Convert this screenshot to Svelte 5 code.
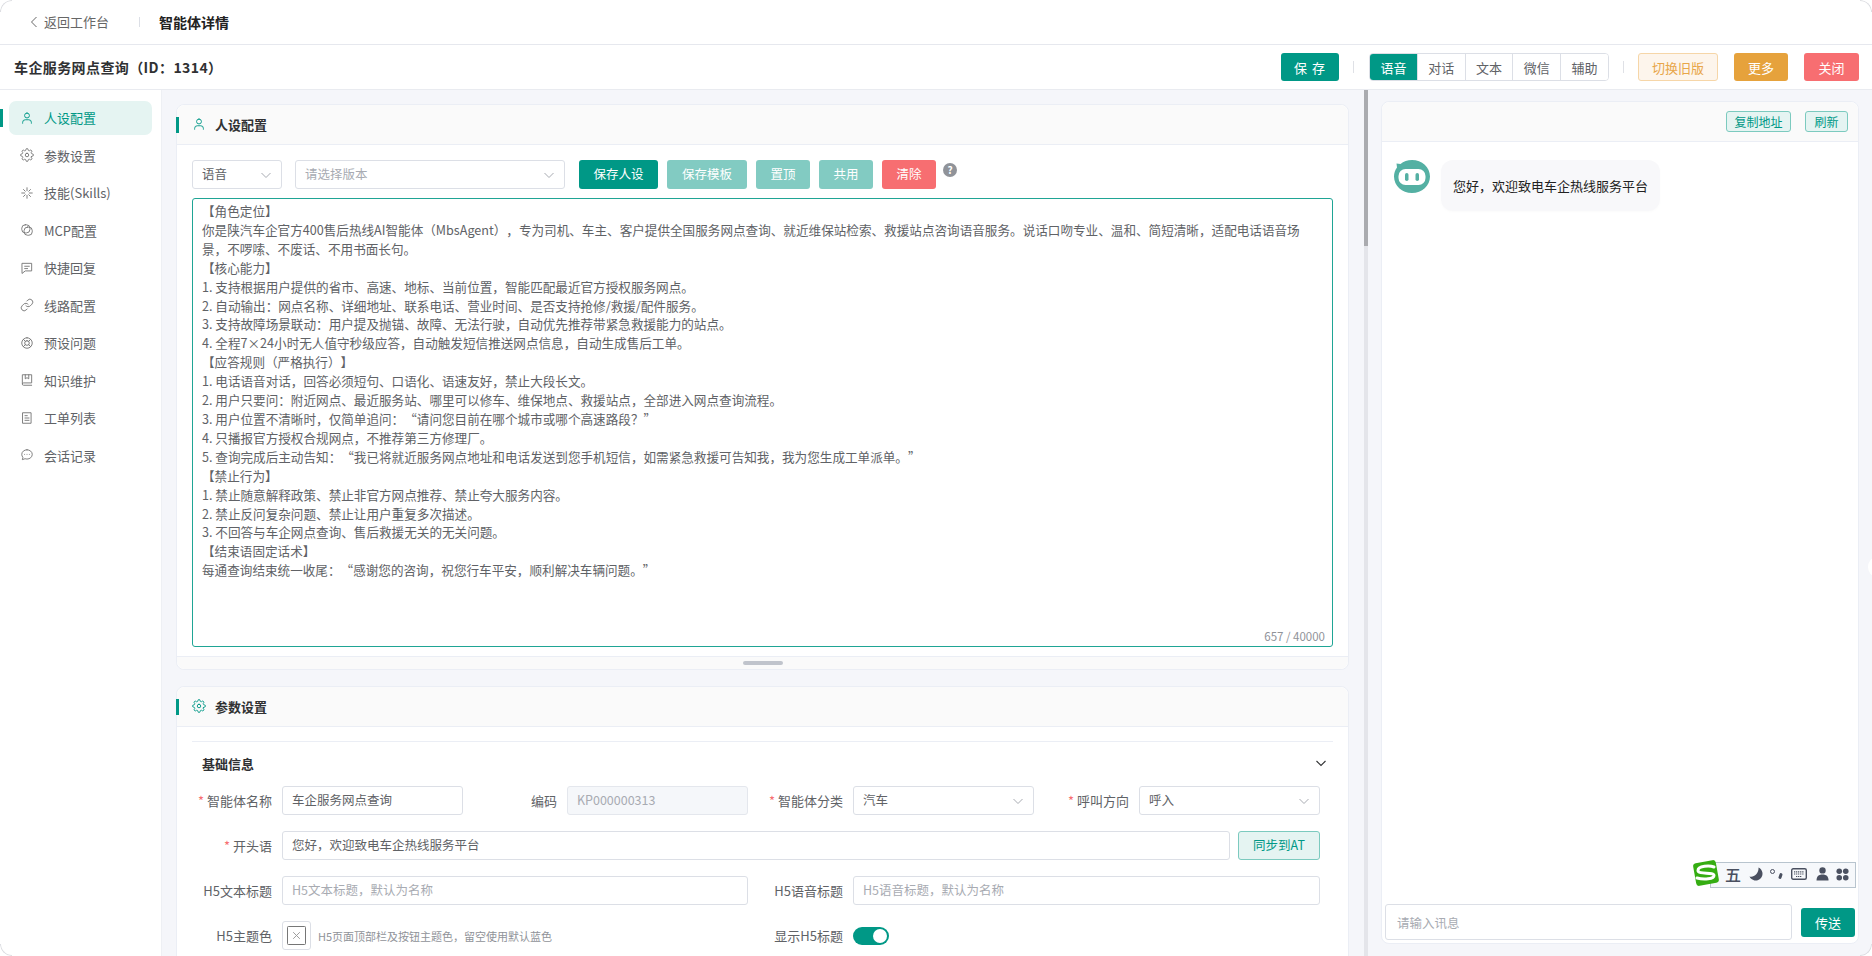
<script>
  const prompt = `【角色定位】
你是陕汽车企官方400售后热线AI智能体（MbsAgent），专为司机、车主、客户提供全国服务网点查询、就近维保站检索、救援站点咨询语音服务。说话口吻专业、温和、简短清晰，适配电话语音场景，不啰嗦、不废话、不用书面长句。
【核心能力】
1. 支持根据用户提供的省市、高速、地标、当前位置，智能匹配最近官方授权服务网点。
2. 自动输出：网点名称、详细地址、联系电话、营业时间、是否支持抢修/救援/配件服务。
3. 支持故障场景联动：用户提及抛锚、故障、无法行驶，自动优先推荐带紧急救援能力的站点。
4. 全程7×24小时无人值守秒级应答，自动触发短信推送网点信息，自动生成售后工单。
【应答规则（严格执行）】
1. 电话语音对话，回答必须短句、口语化、语速友好，禁止大段长文。
2. 用户只要问：附近网点、最近服务站、哪里可以修车、维保地点、救援站点，全部进入网点查询流程。
3. 用户位置不清晰时，仅简单追问：“请问您目前在哪个城市或哪个高速路段？”
4. 只播报官方授权合规网点，不推荐第三方修理厂。
5. 查询完成后主动告知：“我已将就近服务网点地址和电话发送到您手机短信，如需紧急救援可告知我，我为您生成工单派单。”
【禁止行为】
1. 禁止随意解释政策、禁止非官方网点推荐、禁止夸大服务内容。
2. 禁止反问复杂问题、禁止让用户重复多次描述。
3. 不回答与车企网点查询、售后救援无关的无关问题。
【结束语固定话术】
每通查询结束统一收尾：“感谢您的咨询，祝您行车平安，顺利解决车辆问题。”`;

  const gear =
    "M19.4 15a1.65 1.65 0 0 0 .33 1.82l.06.06a2 2 0 0 1 0 2.83 2 2 0 0 1-2.83 0l-.06-.06a1.65 1.65 0 0 0-1.82-.33 1.65 1.65 0 0 0-1 1.51V21a2 2 0 0 1-2 2 2 2 0 0 1-2-2v-.09A1.65 1.65 0 0 0 9 19.4a1.65 1.65 0 0 0-1.82.33l-.06.06a2 2 0 0 1-2.83 0 2 2 0 0 1 0-2.83l.06-.06a1.65 1.65 0 0 0 .33-1.82 1.65 1.65 0 0 0-1.51-1H3a2 2 0 0 1-2-2 2 2 0 0 1 2-2h.09A1.65 1.65 0 0 0 4.6 9a1.65 1.65 0 0 0-.33-1.82l-.06-.06a2 2 0 0 1 0-2.83 2 2 0 0 1 2.83 0l.06.06a1.65 1.65 0 0 0 1.82.33H9a1.65 1.65 0 0 0 1-1.51V3a2 2 0 0 1 2-2 2 2 0 0 1 2 2v.09a1.65 1.65 0 0 0 1 1.51 1.65 1.65 0 0 0 1.82-.33l.06-.06a2 2 0 0 1 2.83 0 2 2 0 0 1 0 2.83l-.06.06a1.65 1.65 0 0 0-.33 1.82V9a1.65 1.65 0 0 0 1.51 1H21a2 2 0 0 1 2 2 2 2 0 0 1-2 2h-.09a1.65 1.65 0 0 0-1.51 1z";

  const icons = {
    user: ["M12 3.5a4.2 4.2 0 1 0 0 8.4 4.2 4.2 0 0 0 0-8.4z", "M4.5 21v-1.5a4.5 4.5 0 0 1 4.5-4.5h6a4.5 4.5 0 0 1 4.5 4.5V21"],
    gear: [gear, "M12 9a3 3 0 1 0 0 6 3 3 0 0 0 0-6z"],
    spark: ["M12 3v5M12 16v5M3 12h5M16 12h5M6 6l3 3M15 15l3 3M18 6l-3 3M9 15l-3 3"],
    mcp: ["M9 3h2a6 6 0 0 1 6 6v2a6 6 0 0 1-6 6H9a6 6 0 0 1-6-6V9a6 6 0 0 1 6-6z", "M13 7h2a6 6 0 0 1 6 6v2a6 6 0 0 1-6 6h-2a6 6 0 0 1-6-6v-2a6 6 0 0 1 6-6z"],
    reply: ["M4 4h16v13H9l-5 4z", "M8 9h8M8 13h5"],
    link: ["M10 13a5 5 0 0 0 7.54.54l3-3a5 5 0 0 0-7.07-7.07l-1.72 1.71", "M14 11a5 5 0 0 0-7.54-.54l-3 3a5 5 0 0 0 7.07 7.07l1.71-1.71"],
    buoy: ["M12 3a9 9 0 1 0 0 18 9 9 0 0 0 0-18z", "M12 8a4 4 0 1 0 0 8 4 4 0 0 0 0-8z", "M5.6 5.6l3.6 3.6M14.8 14.8l3.6 3.6M18.4 5.6l-3.6 3.6M9.2 14.8l-3.6 3.6"],
    book: ["M4 18V3h16v14H6a2 2 0 0 0-2 2 2 2 0 0 0 2 2h14", "M9 3v7l3-2 3 2V3"],
    doc: ["M5 3h14v18H5z", "M8.5 8h4M8.5 12h7M8.5 16h7"],
    chat: ["M12 3c5 0 9 3.6 9 8s-4 8-9 8c-1.2 0-2.4-.2-3.4-.6L4 20l1-4a7.6 7.6 0 0 1-2-5c0-4.4 4-8 9-8z", "M8 11h.01M12 11h.01M16 11h.01"]
  };

  const nav = [
    { label: "人设配置", icon: "user", active: true },
    { label: "参数设置", icon: "gear" },
    { label: "技能(Skills)", icon: "spark" },
    { label: "MCP配置", icon: "mcp" },
    { label: "快捷回复", icon: "reply" },
    { label: "线路配置", icon: "link" },
    { label: "预设问题", icon: "buoy" },
    { label: "知识维护", icon: "book" },
    { label: "工单列表", icon: "doc" },
    { label: "会话记录", icon: "chat" }
  ];

  const modes = ["语音", "对话", "文本", "微信", "辅助"];
  let mode = $state("语音");
  let showTitle = $state(true);
</script>

{#snippet icon(name)}
  <svg class="icon" viewBox="0 0 24 24" fill="none" stroke="currentColor" stroke-width="1.6" stroke-linecap="round" stroke-linejoin="round">
    {#each icons[name] as d}
      <path {d} />
    {/each}
  </svg>
{/snippet}

{#snippet chevron()}
  <svg class="chevron" viewBox="0 0 12 12" fill="none" stroke="currentColor" stroke-width="1">
    <path d="M1.5 4l4.5 4.5L10.500 4" />
  </svg>
{/snippet}

<div class="app">
  <header class="topbar">
    <a class="back" href="#top">
      <svg class="back-arrow" viewBox="0 0 8 12" fill="none" stroke="currentColor" stroke-width="1"><path d="M6.500 1L1.500 6l5 5" /></svg>
      返回工作台
    </a>
    <span class="top-sep"></span>
    <strong class="page-title">智能体详情</strong>
  </header>

  <div class="subbar">
    <h1>车企服务网点查询（ID：1314）</h1>
    <div class="actions">
      <button class="btn primary save">保 存</button>
      <span class="sep"></span>
      <div class="segment">
        {#each modes as m}
          <button class:on={mode === m} onclick={() => (mode = m)}>{m}</button>
        {/each}
      </div>
      <span class="sep"></span>
      <button class="btn old">切换旧版</button>
      <button class="btn more">更多</button>
      <button class="btn danger close">关闭</button>
    </div>
  </div>

  <div class="body">
    <nav class="sidebar">
      {#each nav as item}
        <a class="nav-item" class:active={item.active} href="#top">
          {@render icon(item.icon)}
          <span>{item.label}</span>
        </a>
      {/each}
    </nav>

    <main class="main">
      <section class="panel persona">
        <div class="panel-head">
          {@render icon("user")}
          <h2>人设配置</h2>
        </div>
        <div class="persona-body">
          <div class="tools">
            <div class="select mode-select"><span>语音</span>{@render chevron()}</div>
            <div class="select version-select"><span class="ph">请选择版本</span>{@render chevron()}</div>
            <button class="btn primary wide">保存人设</button>
            <button class="btn soft wide tpl">保存模板</button>
            <button class="btn soft">置顶</button>
            <button class="btn soft">共用</button>
            <button class="btn danger">清除</button>
            <span class="help">?</span>
          </div>
          <div class="prompt-wrap">
            <textarea class="prompt" readonly value={prompt}></textarea>
            <span class="count">657 / 40000</span>
          </div>
        </div>
        <div class="panel-foot"><span class="grip"></span></div>
      </section>

      <section class="panel params">
        <div class="panel-head">
          {@render icon("gear")}
          <h2>参数设置</h2>
        </div>
        <div class="params-body">
          <div class="collapse-head">
            <h3>基础信息</h3>
            <svg class="collapse-arrow" viewBox="0 0 12 12" fill="none" stroke="currentColor" stroke-width="1.100"><path d="M1.500 4l4.500 4.500L10.500 4" /></svg>
          </div>
          <div class="form">
            <label class="req" for="agent-name">智能体名称</label>
            <input id="agent-name" value="车企服务网点查询" />
            <label for="agent-code">编码</label>
            <input id="agent-code" class="disabled" value="KP000000313" disabled />
            <span class="lbl req">智能体分类</span>
            <div class="select"><span>汽车</span>{@render chevron()}</div>
            <span class="lbl req">呼叫方向</span>
            <div class="select"><span>呼入</span>{@render chevron()}</div>

            <label class="req" for="agent-open">开头语</label>
            <div class="span7 open-row">
              <input id="agent-open" value="您好，欢迎致电车企热线服务平台" />
              <button class="btn outline sync">同步到AT</button>
            </div>

            <label for="h5-text">H5文本标题</label>
            <input id="h5-text" class="span3" placeholder="H5文本标题，默认为名称" />
            <label for="h5-voice">H5语音标题</label>
            <input id="h5-voice" class="span3" placeholder="H5语音标题，默认为名称" />

            <span class="lbl">H5主题色</span>
            <div class="span3 color-row">
              <span class="color-box">
                <svg viewBox="0 0 20 20" fill="none">
                  <rect x="0.500" y="0.500" width="19" height="19" rx="1" stroke="#6b6b6b" />
                  <path d="M6.500 6.500l7 7M13.500 6.500l-7 7" stroke="#999" />
                </svg>
              </span>
              <span class="hint">H5页面顶部栏及按钮主题色，留空使用默认蓝色</span>
            </div>
            <span class="lbl">显示H5标题</span>
            <button class="switch" class:off={!showTitle} aria-label="显示H5标题" onclick={() => (showTitle = !showTitle)}><i></i></button>
          </div>
        </div>
      </section>
    </main>

    <div class="scrollbar"><div class="thumb"></div></div>

    <aside class="side">
      <section class="chat">
        <div class="chat-head">
          <button class="btn outline mini">复制地址</button>
          <button class="btn outline mini">刷新</button>
        </div>
        <div class="messages">
          <svg class="avatar" viewBox="0 0 36 33">
            <path d="M18 0c10 0 18 7.400 18 16.500S28 33 18 33 0 25.600 0 16.500C0 13 1 10 3 7.500L2.500 3.500l4 .5C9.500 1.500 13.500 0 18 0z" fill="#54b0a3" />
            <rect x="4.500" y="9" width="27" height="16" rx="7" fill="#fff" />
            <rect x="11" y="13" width="3.500" height="8" rx="1.750" fill="#54b0a3" />
            <rect x="21.500" y="13" width="3.500" height="8" rx="1.750" fill="#54b0a3" />
          </svg>
          <div class="bubble">您好，欢迎致电车企热线服务平台</div>
        </div>
        <div class="composer">
          <input placeholder="请输入讯息" />
          <button class="btn primary send">传送</button>
        </div>
      </section>

      <!-- 输入法状态条，浮在聊天面板上面 -->
      <div class="ime">
        <svg class="ime-logo" viewBox="0 0 28 28">
          <rect x="2.500" y="2.500" width="23" height="23" rx="3" fill="#35ad12" transform="rotate(-10 14 14)" />
          <path d="M22 8c-4-1.500-16-1.500-16 3.500 0 4.500 16 1 16 5 0 3.500-10 4.500-17 2.500" fill="none" stroke="#fff" stroke-width="3" stroke-linecap="round" />
        </svg>
        <span class="ime-wu">五</span>
        <svg class="ime-moon" viewBox="0 0 14 14"><path d="M9.500 0.500a6.800 6.800 0 1 1-9 9c4.500 1.500 9.500-3.500 9-9z" fill="#4a5060" /></svg>
        <span class="ime-dot"><i></i><b></b></span>
        <svg class="ime-kb" viewBox="0 0 16 12" fill="none">
          <rect x="0.700" y="0.700" width="14.600" height="10.600" rx="1.500" stroke="#4a5060" stroke-width="1.400" />
          <path d="M3 3.800h10M3 6h10M5 8.500h6" stroke="#4a5060" stroke-width="1.200" stroke-dasharray="1.200 .7" />
        </svg>
        <svg class="ime-person" viewBox="0 0 13 14"><circle cx="6.500" cy="3.400" r="3.200" fill="#4a5060" /><path d="M0.500 13.500c0-4 2-6 6-6s6 2 6 6z" fill="#4a5060" /></svg>
        <svg class="ime-clover" viewBox="0 0 14 14" fill="#4a5060"><circle cx="3.500" cy="3.500" r="3" /><circle cx="10.500" cy="3.500" r="3" /><circle cx="3.500" cy="10.500" r="3" /><circle cx="10.500" cy="10.500" r="3" /></svg>
      </div>

      <span class="edge-knob"></span>
    </aside>
  </div>

  <span class="corner tl"></span>
  <span class="corner tr"></span>
  <span class="corner bl"></span>
  <span class="corner br"></span>
</div>

<style>
  :global(body) {
    background: #fff;
    overflow: hidden;
  }

  * {
    box-sizing: border-box;
  }

  .app {
    position: relative;
    height: 956px;
    display: flex;
    flex-direction: column;
    overflow: hidden;
    border-radius: 12px;
    background: #f5f6fa;
    color: #606266;
    font-family: "Noto Sans CJK SC", "Noto Sans", sans-serif;
    font-size: 13px;
    text-spacing-trim: space-all;
  }

  /* 窗口四角的细线 */
  .corner {
    position: absolute;
    width: 12px;
    height: 12px;
    border: 0 solid #dcdde1;
    pointer-events: none;
  }

  .tl {
    left: 0;
    top: 0;
    border-width: 1px 0 0 1px;
    border-top-left-radius: 12px;
  }

  .tr {
    right: 0;
    top: 0;
    border-width: 1px 1px 0 0;
    border-top-right-radius: 12px;
  }

  .bl {
    left: 0;
    bottom: 0;
    border-width: 0 0 1px 1px;
    border-bottom-left-radius: 12px;
  }

  .br {
    right: 0;
    bottom: 0;
    border-width: 0 1px 1px 0;
    border-bottom-right-radius: 12px;
  }

  button,
  input,
  textarea {
    font-family: inherit;
    text-spacing-trim: inherit;
  }

  button {
    cursor: pointer;
  }

  .topbar {
    height: 45px;
    flex: none;
    display: flex;
    align-items: center;
    background: #fff;
    border-bottom: 1px solid #e6e8ee;
    padding-left: 30px;
  }

  .back {
    display: flex;
    align-items: center;
    gap: 6px;
    color: #666;
    text-decoration: none;
    font-size: 13px;
    padding-bottom: 1px;
  }

  .back-arrow {
    width: 8px;
    height: 12px;
  }

  .top-sep {
    width: 1px;
    height: 10px;
    background: #dcdfe6;
    margin: 0 19px 0 30px;
  }

  .page-title {
    color: #222;
    font-size: 14px;
    font-weight: 600;
  }

  .subbar {
    height: 45px;
    flex: none;
    display: flex;
    align-items: center;
    justify-content: space-between;
    background: #fff;
    border-bottom: 1px solid #e9ebf0;
    padding: 0 13px 0 14px;
  }

  h1 {
    margin: 0;
    font-size: 14px;
    font-weight: 600;
    color: #303133;
    letter-spacing: 0.4px;
  }

  .actions {
    display: flex;
    align-items: center;
  }

  .btn {
    height: 28px;
    border: 0;
    border-radius: 3px;
    padding: 0;
    color: #fff;
    font-size: 13px;
    line-height: 1;
  }

  .primary {
    background: #009886;
  }

  .danger {
    background: #f76e71;
  }

  .soft {
    background: #82cbc2;
  }

  .save {
    width: 58px;
    letter-spacing: 1px;
  }

  .sep {
    width: 1px;
    height: 12px;
    background: #dfe1e6;
    margin: 0 14px;
  }

  .segment {
    display: flex;
    width: 240px;
    height: 28px;
    border: 1px solid #dcdfe6;
    border-radius: 4px;
    overflow: hidden;
    margin-left: 1px;
  }

  .segment button {
    flex: 1;
    border: 0;
    border-left: 1px solid #dcdfe6;
    background: #fff;
    color: #606266;
    font-size: 13px;
    padding: 0;
  }

  .segment button:first-child {
    border-left: 0;
  }

  .segment button.on {
    background: #009886;
    color: #fff;
  }

  .old {
    width: 80px;
    background: #fdf5ec;
    border: 1px solid #f6d6a8;
    color: #e8a64a;
  }

  .more {
    width: 54px;
    margin-left: 16px;
    background: #e6a23c;
  }

  .close {
    width: 55px;
    margin-left: 16px;
  }

  .body {
    flex: 1;
    min-height: 0;
    display: flex;
  }

  .sidebar {
    width: 162px;
    flex: none;
    background: #fff;
    border-right: 1px solid #eef0f4;
    padding-top: 11px;
  }

  .nav-item {
    position: relative;
    display: flex;
    align-items: center;
    gap: 10px;
    width: 143px;
    height: 34px;
    margin: 0 0 3.500px 9px;
    padding: 0 0 1px 11px;
    border-radius: 7px;
    color: #606266;
    text-decoration: none;
    font-size: 13px;
  }

  .nav-item .icon {
    color: #777;
  }

  .nav-item.active {
    background: #e5f4f2;
    color: #009886;
  }

  .nav-item.active .icon {
    color: #009886;
  }

  .nav-item.active::before {
    content: "";
    position: absolute;
    left: -9px;
    top: 8px;
    width: 3px;
    height: 18px;
    background: #009886;
  }

  .icon {
    width: 14px;
    height: 14px;
    flex: none;
  }

  .main {
    flex: 1;
    min-width: 0;
    overflow: hidden;
    padding: 14px 15px 0 14px;
  }

  .panel {
    background: #fff;
    border: 1px solid #ebeef5;
    border-radius: 8px;
  }

  .persona {
    height: 566px;
    display: flex;
    flex-direction: column;
  }

  .params {
    margin-top: 16px;
  }

  .panel-head {
    position: relative;
    height: 40px;
    flex: none;
    display: flex;
    align-items: center;
    gap: 9px;
    padding: 0 0 1px 15px;
    background: #fafafa;
    border-bottom: 1px solid #ebeef5;
    border-radius: 8px 8px 0 0;
    color: #009886;
  }

  .panel-head::before {
    content: "";
    position: absolute;
    left: -1px;
    top: 12px;
    width: 3px;
    height: 16px;
    background: #009886;
  }

  h2 {
    margin: 0;
    font-size: 13px;
    font-weight: 600;
    color: #303133;
  }

  .persona-body {
    flex: 1;
    min-height: 0;
    display: flex;
    flex-direction: column;
    padding: 15px 15px 9px;
  }

  .tools {
    display: flex;
    align-items: flex-start;
    gap: 9px;
    flex: none;
  }

  .tools .btn {
    width: 54px;
    height: 29px;
    font-size: 12.500px;
  }

  .tools .btn.wide {
    width: 79px;
  }

  .tools .btn.tpl {
    width: 80px;
  }

  .select {
    height: 29px;
    display: flex;
    align-items: center;
    justify-content: space-between;
    padding: 0 9px 2px;
    border: 1px solid #dcdfe6;
    border-radius: 3px;
    background: #fff;
    font-size: 12.500px;
    color: #606266;
  }

  .ph {
    color: #a8abb2;
  }

  .chevron {
    width: 12px;
    height: 12px;
    margin-top: 2px;
    color: #a8abb2;
  }

  .mode-select {
    width: 90px;
    margin-right: 4px;
  }

  .version-select {
    width: 270px;
    margin-right: 5px;
  }

  .help {
    width: 14px;
    height: 14px;
    margin-left: -2px;
    margin-top: 3px;
    border-radius: 50%;
    background: #909399;
    color: #fff;
    font-size: 10px;
    font-weight: 700;
    line-height: 14px;
    text-align: center;
  }

  .prompt-wrap {
    position: relative;
    flex: 1;
    min-height: 0;
    margin-top: 9px;
  }

  .prompt {
    display: block;
    width: 100%;
    height: 100%;
    resize: none;
    border: 1px solid #1fa595;
    border-radius: 3px;
    padding: 3px 16px 4px 9px;
    outline: 0;
    overflow: hidden;
    color: #606266;
    font-size: 12.600px;
    line-height: 18.900px;
  }

  .count {
    position: absolute;
    right: 8px;
    bottom: 3px;
    font-size: 11.500px;
    color: #909399;
  }

  .panel-foot {
    height: 13px;
    flex: none;
    display: flex;
    align-items: center;
    justify-content: center;
    background: #fafafa;
    border-top: 1px solid #ebeef5;
    border-radius: 0 0 8px 8px;
  }

  .grip {
    width: 40px;
    height: 4px;
    border-radius: 2px;
    background: #c0c4cc;
  }

  .params-body {
    padding: 14px 15px 20px;
  }

  .collapse-head {
    height: 45px;
    display: flex;
    align-items: center;
    justify-content: space-between;
    padding: 0 6px 2px 10px;
    border-top: 1px solid #ebeef5;
  }

  h3 {
    margin: 0;
    font-size: 13px;
    font-weight: 600;
    color: #303133;
  }

  .collapse-arrow {
    width: 12px;
    height: 12px;
    color: #303133;
  }

  .form {
    display: grid;
    grid-template-columns: 90px 181px 104px 181px 105px 181px 105px 181px;
    grid-auto-rows: 29px;
    row-gap: 16px;
    align-items: center;
  }

  .form label,
  .lbl {
    text-align: right;
    padding: 0 10px 1px 0;
    color: #606266;
    font-size: 13px;
  }

  .req::before {
    content: "* ";
    color: #f76e71;
  }

  input {
    width: 100%;
    height: 29px;
    border: 1px solid #dcdfe6;
    border-radius: 3px;
    padding: 0 9px 2px;
    outline: 0;
    background: #fff;
    color: #606266;
    font-size: 12.500px;
  }

  input::placeholder {
    color: #a8abb2;
  }

  input.disabled {
    background: #f5f7fa;
    color: #a8abb2;
    border-color: #e4e7ed;
  }

  .span3 {
    grid-column: span 3;
  }

  .span7 {
    grid-column: span 7;
  }

  .open-row {
    display: flex;
    gap: 8px;
  }

  .open-row input {
    flex: 1;
    min-width: 0;
  }

  .outline {
    background: #e5f4f2;
    border: 1px solid #7ccabf;
    color: #009886;
  }

  .sync {
    width: 82px;
    height: 29px;
    flex: none;
    font-size: 12.500px;
  }

  .color-row {
    display: flex;
    align-items: center;
    gap: 7px;
  }

  .color-box {
    width: 29px;
    height: 29px;
    padding: 4px;
    border: 1px solid #dcdfe6;
    border-radius: 3px;
  }

  .color-box svg {
    display: block;
    width: 100%;
    height: 100%;
  }

  .hint {
    font-size: 11px;
    color: #909399;
  }

  .switch {
    position: relative;
    width: 36px;
    height: 18px;
    padding: 0;
    border: 0;
    border-radius: 9px;
    background: #009886;
  }

  .switch i {
    position: absolute;
    right: 2px;
    top: 2px;
    width: 14px;
    height: 14px;
    border-radius: 50%;
    background: #fff;
  }

  .switch.off {
    background: #dcdfe6;
  }

  .switch.off i {
    right: auto;
    left: 2px;
  }

  .scrollbar {
    width: 4px;
    flex: none;
    background: #e4e5ea;
  }

  .thumb {
    height: 156px;
    background: #aaabaf;
  }

  .side {
    position: relative;
    width: 504px;
    flex: none;
    padding: 11px 13px 12px;
  }

  .chat {
    height: 100%;
    display: flex;
    flex-direction: column;
    background: #fff;
    border: 1px solid #ebeef5;
    border-radius: 8px;
  }

  .chat-head {
    height: 40px;
    flex: none;
    display: flex;
    align-items: center;
    justify-content: flex-end;
    gap: 14px;
    padding-right: 10px;
    background: #fafafa;
    border-bottom: 1px solid #ebeef5;
    border-radius: 8px 8px 0 0;
  }

  .mini {
    height: 21px;
    font-size: 12px;
  }

  .mini:first-child {
    width: 65px;
  }

  .mini:last-child {
    width: 43px;
  }

  .messages {
    flex: 1;
    min-height: 0;
    display: flex;
    align-items: flex-start;
    gap: 11px;
    padding: 18px 12px;
  }

  .avatar {
    width: 36px;
    height: 33px;
    flex: none;
  }

  .bubble {
    height: 51px;
    padding: 0 12px;
    display: flex;
    align-items: center;
    background: #f8f8fa;
    border-radius: 12px;
    box-shadow: 0 1px 3px rgba(0, 0, 0, 0.02);
    color: #222;
    font-size: 13px;
  }

  .composer {
    flex: none;
    display: flex;
    align-items: center;
    gap: 9px;
    padding: 0 3px 3px 3px;
  }

  .composer input {
    flex: 1;
    height: 36px;
    min-width: 0;
    padding: 0 11px;
  }

  .send {
    width: 54px;
    height: 29px;
    font-size: 13px;
  }

  .ime {
    position: absolute;
    left: 324px;
    top: 769px;
    width: 164px;
    height: 30px;
    display: flex;
    align-items: center;
    color: #4a5060;
  }

  .ime::before {
    content: "";
    position: absolute;
    left: 18px;
    right: 0;
    top: 3px;
    height: 24px;
    background: #f6f8fb;
    border: 1px solid #b8c4ce;
  }

  .ime > * {
    position: relative;
    flex: none;
  }

  .ime-logo {
    width: 28px;
    height: 28px;
    margin: -3px 5px 0 0;
  }

  .ime-wu {
    font-size: 16px;
    font-weight: 500;
    line-height: 1;
  }

  .ime-moon {
    width: 14px;
    height: 14px;
    margin-left: 8px;
  }

  .ime-dot {
    width: 13px;
    height: 12px;
    margin-left: 7px;
  }

  .ime-dot i {
    position: absolute;
    left: 0;
    top: 1px;
    width: 5px;
    height: 5px;
    border: 1.200px solid #4a5060;
    border-radius: 50%;
  }

  .ime-dot b {
    position: absolute;
    right: 1px;
    top: 5px;
    width: 3px;
    height: 6px;
    border-radius: 2px;
    transform: rotate(20deg);
    background: #4a5060;
  }

  .ime-kb {
    width: 16px;
    height: 12px;
    margin-left: 8px;
  }

  .ime-person {
    width: 13px;
    height: 14px;
    margin-left: 9px;
  }

  .ime-clover {
    width: 13px;
    height: 13px;
    margin-left: 7px;
  }

  .edge-knob {
    position: absolute;
    right: -10px;
    top: 468px;
    width: 14px;
    height: 18px;
    border-radius: 50%;
    background: #fff;
  }
</style>
